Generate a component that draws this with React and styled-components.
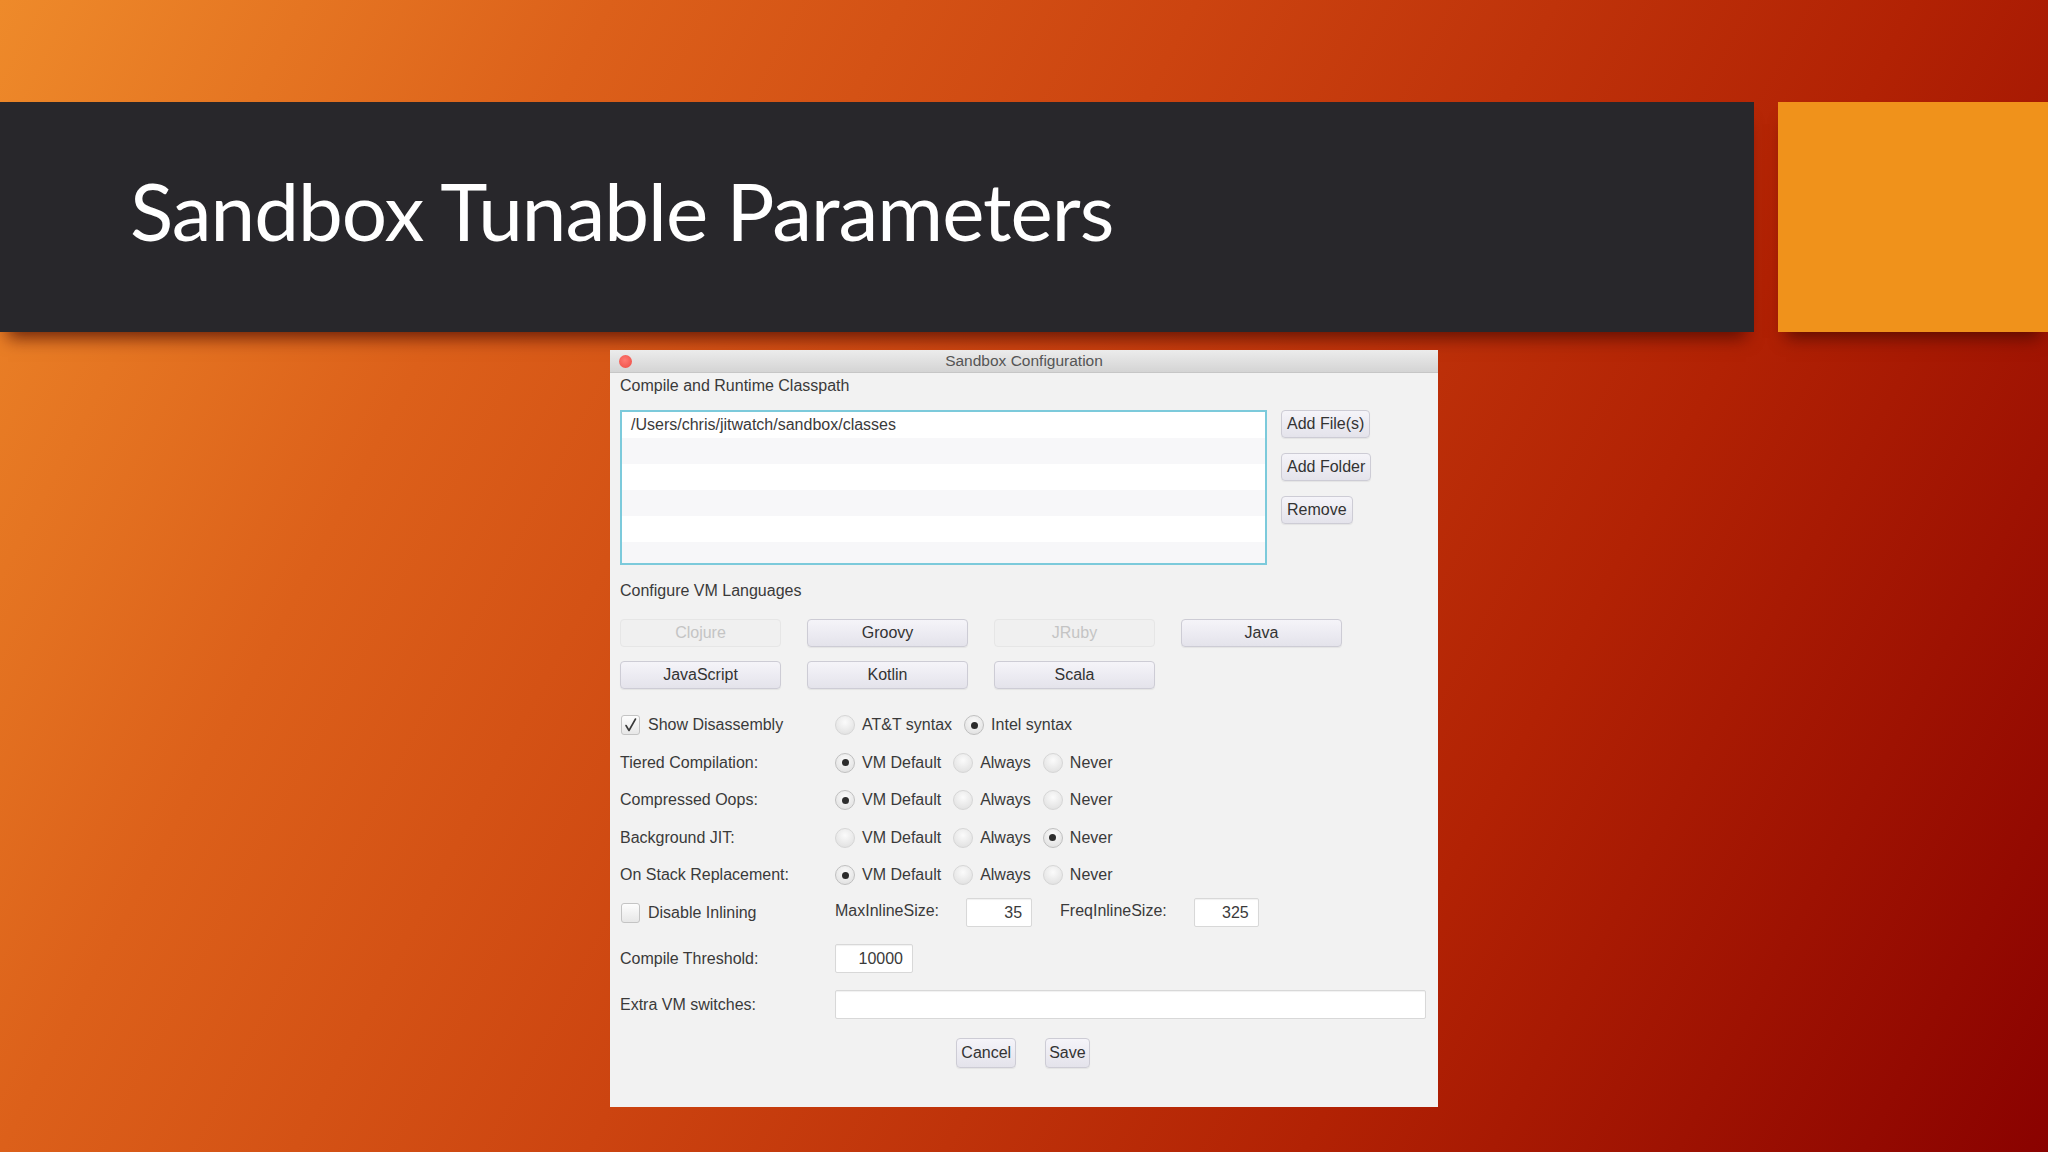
import React from "react";
import styled, { createGlobalStyle } from "styled-components";

const GlobalStyle = createGlobalStyle`
  html, body {
    margin: 0;
    padding: 0;
  }
  body {
    width: 2048px;
    height: 1152px;
    overflow: hidden;
  }
`;

const Slide = styled.div`
  width: 2048px;
  height: 1152px;
  box-sizing: border-box;
  overflow: hidden;
  padding-top: 102px;
  display: flex;
  flex-direction: column;
  background: linear-gradient(
    118deg,
    #ee8a2a 0%,
    #dc601a 23%,
    #cc4410 45%,
    #b22204 72%,
    #8a0200 100%
  );
`;

const HeaderRow = styled.div`
  display: flex;
  gap: 24px;
  height: 230px;
`;

const TitleBand = styled.div`
  width: 1754px;
  box-sizing: border-box;
  padding: 0 0 14px 130px;
  display: flex;
  align-items: center;
  background: #28272b;
  box-shadow: 0 14px 16px -8px rgba(70, 8, 0, 0.75);
`;

const SlideTitle = styled.h1`
  margin: 0;
  font-family: Lato, "Open Sans", sans-serif;
  font-weight: 400;
  font-size: 80px;
  letter-spacing: -1px;
  color: #ffffff;
  white-space: nowrap;
`;

const AccentBlock = styled.div`
  flex: 1;
  background: #f0921b;
  box-shadow: 0 14px 16px -8px rgba(70, 8, 0, 0.75);
`;

const DialogRow = styled.div`
  display: flex;
  justify-content: center;
  margin-top: 18px;
`;

const Dialog = styled.div`
  width: 828px;
  height: 757px;
  display: flex;
  flex-direction: column;
  background: #f2f2f2;
  font-family: "Liberation Sans", Arial, sans-serif;
  font-size: 16px;
  color: #3a3a3a;
`;

const WindowBar = styled.div`
  height: 22px;
  display: grid;
  grid-template-columns: 30px 1fr 30px;
  align-items: center;
  background: linear-gradient(#ececec, #d4d4d4);
  border-bottom: 1px solid #c6c6c6;
  flex-shrink: 0;
`;

const CloseDot = styled.span`
  width: 13px;
  height: 13px;
  margin-left: 9px;
  border-radius: 50%;
  background: radial-gradient(circle at 45% 40%, #ff7a72, #ec4b43);
`;

const WindowTitle = styled.div`
  text-align: center;
  font-size: 15.5px;
  color: #555;
`;

const Body = styled.div`
  display: flex;
  flex-direction: column;
  padding: 0 12px 0 10px;
`;

const SectionLabel = styled.div`
  height: 20px;
  line-height: 20px;
  margin-top: ${({ $top }) => $top}px;
`;

const ListRow = styled.div`
  display: flex;
  gap: 14px;
  margin-top: 14px;
`;

const ListBox = styled.div`
  width: 647px;
  height: 155px;
  box-sizing: border-box;
  border: 2px solid #7ccadb;
  background: #fff;
  overflow: hidden;
`;

const ListItem = styled.div`
  height: 26px;
  line-height: 26px;
  padding-left: 9px;
  &:nth-child(even) {
    background: #f7f7f9;
  }
`;

const SideButtons = styled.div`
  display: flex;
  flex-direction: column;
  align-items: flex-start;
  gap: 15px;
`;

const PushButton = styled.button`
  height: ${({ $h }) => $h || 28}px;
  padding: 0 ${({ $px }) => $px || 5}px;
  box-sizing: border-box;
  font-family: "Liberation Sans", Arial, sans-serif;
  font-size: 16px;
  color: #333;
  background: linear-gradient(#f5f4f9, #e4e3eb);
  border: 1px solid #cdccd5;
  border-radius: 4px;
  box-shadow: 0 1px 1px rgba(0, 0, 0, 0.06);
`;

const LangGrid = styled.div`
  display: grid;
  grid-template-columns: repeat(4, 161px);
  column-gap: 26px;
  row-gap: 14px;
  margin-top: 18px;
`;

const LangButton = styled.button`
  height: 28px;
  box-sizing: border-box;
  font-family: "Liberation Sans", Arial, sans-serif;
  font-size: 16px;
  border-radius: 4px;
  color: ${({ disabled }) => (disabled ? "#c4c4c4" : "#333")};
  background: ${({ disabled }) =>
    disabled ? "#f0f0f0" : "linear-gradient(#f5f4f9, #e4e3eb)"};
  border: 1px solid ${({ disabled }) => (disabled ? "#e6e6e6" : "#cdccd5")};
  box-shadow: ${({ disabled }) =>
    disabled ? "none" : "0 1px 1px rgba(0, 0, 0, 0.06)"};
`;

const Options = styled.div`
  display: flex;
  flex-direction: column;
  gap: 7.5px;
  margin-top: 21px;
`;

const OptionRow = styled.div`
  display: flex;
  align-items: center;
  height: 30px;
  margin-top: ${({ $top }) => $top || 0}px;
`;

const RowLabel = styled.div`
  width: 215px;
  flex-shrink: 0;
  display: flex;
  align-items: center;
  gap: 8px;
`;

const Choices = styled.div`
  display: flex;
  align-items: center;
  gap: 12px;
`;

const Choice = styled.label`
  display: flex;
  align-items: center;
  gap: 7px;
`;

const Radio = styled.span`
  width: 20px;
  height: 20px;
  box-sizing: border-box;
  border-radius: 50%;
  border: 1px solid ${({ $on }) => ($on ? "#c0c0c0" : "#d6d6d6")};
  background: radial-gradient(circle at 50% 35%, #fbfbfb, #dcdcdc);
  display: inline-flex;
  align-items: center;
  justify-content: center;
  &::after {
    content: "";
    width: 7px;
    height: 7px;
    border-radius: 50%;
    background: #2c2c2c;
    display: ${({ $on }) => ($on ? "block" : "none")};
  }
`;

const Check = styled.span`
  width: 19px;
  height: 20px;
  margin-left: 1px;
  box-sizing: border-box;
  border: 1px solid #c4c4c4;
  border-radius: 3px;
  background: linear-gradient(#fdfdfd, #e7e7e7);
  display: inline-flex;
  align-items: center;
  justify-content: center;
`;

const FieldLabel = styled.span`
  margin-right: ${({ $gap }) => $gap || 27}px;
  align-self: flex-start;
  line-height: 26px;
`;

const TextField = styled.div`
  width: ${({ $w }) => ($w ? `${$w}px` : "auto")};
  flex: ${({ $w }) => ($w ? "none" : 1)};
  height: 29px;
  box-sizing: border-box;
  padding: 0 9px;
  margin-right: ${({ $mr }) => $mr || 0}px;
  display: flex;
  align-items: center;
  justify-content: flex-end;
  background: #fff;
  border: 1px solid #d8d8d8;
  border-radius: 2px;
  box-shadow: inset 0 1px 1px rgba(0, 0, 0, 0.06);
`;

const Footer = styled.div`
  display: flex;
  justify-content: center;
  gap: 29px;
  margin-top: 18px;
`;

const CheckBox = ({ checked }) => (
  <Check>
    {checked && (
      <svg width="15" height="16" viewBox="0 0 15 16">
        <path
          d="M3 8.5 L6 13.5 L12.5 2"
          fill="none"
          stroke="#3a3a3a"
          strokeWidth="1.6"
          strokeLinecap="round"
          strokeLinejoin="round"
        />
      </svg>
    )}
  </Check>
);

const RadioSet = ({ items, value }) => (
  <Choices>
    {items.map((item) => (
      <Choice key={item}>
        <Radio $on={item === value} />
        {item}
      </Choice>
    ))}
  </Choices>
);

const modes = ["VM Default", "Always", "Never"];

const tri = [
  ["Tiered Compilation:", "VM Default"],
  ["Compressed Oops:", "VM Default"],
  ["Background JIT:", "Never"],
  ["On Stack Replacement:", "VM Default"],
];

const languages = [
  ["Clojure", true],
  ["Groovy", false],
  ["JRuby", true],
  ["Java", false],
  ["JavaScript", false],
  ["Kotlin", false],
  ["Scala", false],
];

const App = () => {
  return (
    <>
      <GlobalStyle />
      <Slide>
        <HeaderRow>
          <TitleBand>
            <SlideTitle>Sandbox Tunable Parameters</SlideTitle>
          </TitleBand>
          <AccentBlock />
        </HeaderRow>

        <DialogRow>
          <Dialog>
            <WindowBar>
              <CloseDot />
              <WindowTitle>Sandbox Configuration</WindowTitle>
              <span />
            </WindowBar>

            <Body>
              <SectionLabel $top={3}>Compile and Runtime Classpath</SectionLabel>
              <ListRow>
                <ListBox>
                  <ListItem>/Users/chris/jitwatch/sandbox/classes</ListItem>
                  <ListItem />
                  <ListItem />
                  <ListItem />
                  <ListItem />
                  <ListItem />
                </ListBox>
                <SideButtons>
                  <PushButton>Add File(s)</PushButton>
                  <PushButton>Add Folder</PushButton>
                  <PushButton>Remove</PushButton>
                </SideButtons>
              </ListRow>

              <SectionLabel $top={16}>Configure VM Languages</SectionLabel>
              <LangGrid>
                {languages.map(([name, off]) => (
                  <LangButton key={name} disabled={off}>
                    {name}
                  </LangButton>
                ))}
              </LangGrid>

              <Options>
                <OptionRow>
                  <RowLabel>
                    <CheckBox checked />
                    Show Disassembly
                  </RowLabel>
                  <RadioSet items={["AT&T syntax", "Intel syntax"]} value="Intel syntax" />
                </OptionRow>
                {tri.map(([label, value]) => (
                  <OptionRow key={label}>
                    <RowLabel>{label}</RowLabel>
                    <RadioSet items={modes} value={value} />
                  </OptionRow>
                ))}
                <OptionRow>
                  <RowLabel>
                    <CheckBox />
                    Disable Inlining
                  </RowLabel>
                  <FieldLabel>MaxInlineSize:</FieldLabel>
                  <TextField $w={66} $mr={28}>35</TextField>
                  <FieldLabel>FreqInlineSize:</FieldLabel>
                  <TextField $w={65}>325</TextField>
                </OptionRow>
              </Options>

              <OptionRow $top={16}>
                <RowLabel>Compile Threshold:</RowLabel>
                <TextField $w={78}>10000</TextField>
              </OptionRow>
              <OptionRow $top={16}>
                <RowLabel>Extra VM switches:</RowLabel>
                <TextField />
              </OptionRow>

              <Footer>
                <PushButton $h={30} $px={4}>Cancel</PushButton>
                <PushButton $h={30} $px={3}>Save</PushButton>
              </Footer>
            </Body>
          </Dialog>
        </DialogRow>
      </Slide>
    </>
  );
};

export default App;
